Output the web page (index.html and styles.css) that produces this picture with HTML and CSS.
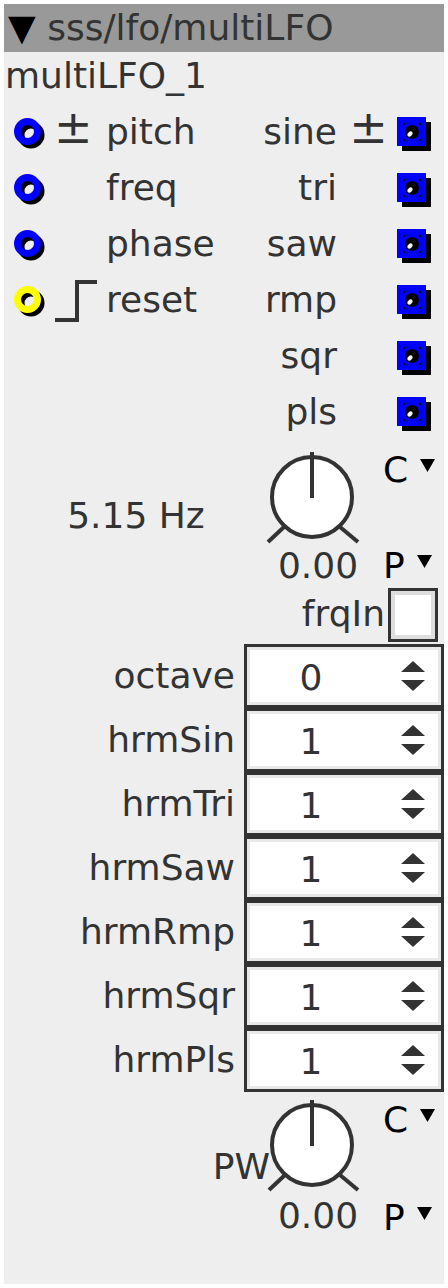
FILE: index.html
```html
<!DOCTYPE html>
<html>
<head>
<meta charset="utf-8">
<link rel="stylesheet" href="styles.css">
</head>
<body>
<div class="node">
  <div class="hdr"><span class="hdr-tri">▼</span> sss/lfo/multiLFO</div>
  <div class="name">multiLFO_1</div>

  <div class="io">
    <div class="ins">
      <div class="in">
        <svg class="iport" width="40" height="40" viewBox="0 0 40 40"><circle cx="21" cy="23" r="10" fill="none" stroke="#000" stroke-width="7"/><circle cx="17.5" cy="19.5" r="10" fill="none" stroke="#0000ff" stroke-width="7"/></svg>
        <span class="sign">±</span>
        <span class="lbl">pitch</span>
      </div>
      <div class="in">
        <svg class="iport" width="40" height="40" viewBox="0 0 40 40"><circle cx="21" cy="23" r="10" fill="none" stroke="#000" stroke-width="7"/><circle cx="17.5" cy="19.5" r="10" fill="none" stroke="#0000ff" stroke-width="7"/></svg>
        <span class="sign"></span>
        <span class="lbl">freq</span>
      </div>
      <div class="in">
        <svg class="iport" width="40" height="40" viewBox="0 0 40 40"><circle cx="21" cy="23" r="10" fill="none" stroke="#000" stroke-width="7"/><circle cx="17.5" cy="19.5" r="10" fill="none" stroke="#0000ff" stroke-width="7"/></svg>
        <span class="sign"></span>
        <span class="lbl">phase</span>
      </div>
      <div class="in">
        <svg class="iport" width="40" height="40" viewBox="0 0 40 40"><circle cx="21" cy="23" r="10" fill="none" stroke="#000" stroke-width="7"/><circle cx="17.5" cy="19.5" r="10" fill="none" stroke="#ffff00" stroke-width="7"/></svg>
        <span class="sign step-cell"><svg class="step" width="52" height="56" viewBox="0 0 52 56"><path d="M1 48 H23 V10 H43" fill="none" stroke="#333" stroke-width="4"/></svg></span>
        <span class="lbl">reset</span>
      </div>
    </div>

    <div class="outs">
      <div class="out">
        <span class="lbl">sine</span>
        <span class="sign">±</span>
        <svg class="oport" width="40" height="40" viewBox="0 0 40 40"><rect x="8" y="10" width="29" height="29" fill="#000"/><rect x="3" y="5" width="29" height="29" fill="#0000ff"/><circle cx="18" cy="20" r="7" fill="#000"/><ellipse cx="16" cy="22" rx="3" ry="2" transform="rotate(-45 16 22)" fill="#fff"/><circle cx="10" cy="12" r="1.3" fill="#000"/><circle cx="26" cy="12" r="1.3" fill="#000"/><circle cx="10" cy="28" r="1.3" fill="#000"/><circle cx="26" cy="28" r="1.3" fill="#000"/></svg>
      </div>
      <div class="out">
        <span class="lbl">tri</span>
        <span class="sign"></span>
        <svg class="oport" width="40" height="40" viewBox="0 0 40 40"><rect x="8" y="10" width="29" height="29" fill="#000"/><rect x="3" y="5" width="29" height="29" fill="#0000ff"/><circle cx="18" cy="20" r="7" fill="#000"/><ellipse cx="16" cy="22" rx="3" ry="2" transform="rotate(-45 16 22)" fill="#fff"/><circle cx="10" cy="12" r="1.3" fill="#000"/><circle cx="26" cy="12" r="1.3" fill="#000"/><circle cx="10" cy="28" r="1.3" fill="#000"/><circle cx="26" cy="28" r="1.3" fill="#000"/></svg>
      </div>
      <div class="out">
        <span class="lbl">saw</span>
        <span class="sign"></span>
        <svg class="oport" width="40" height="40" viewBox="0 0 40 40"><rect x="8" y="10" width="29" height="29" fill="#000"/><rect x="3" y="5" width="29" height="29" fill="#0000ff"/><circle cx="18" cy="20" r="7" fill="#000"/><ellipse cx="16" cy="22" rx="3" ry="2" transform="rotate(-45 16 22)" fill="#fff"/><circle cx="10" cy="12" r="1.3" fill="#000"/><circle cx="26" cy="12" r="1.3" fill="#000"/><circle cx="10" cy="28" r="1.3" fill="#000"/><circle cx="26" cy="28" r="1.3" fill="#000"/></svg>
      </div>
      <div class="out">
        <span class="lbl">rmp</span>
        <span class="sign"></span>
        <svg class="oport" width="40" height="40" viewBox="0 0 40 40"><rect x="8" y="10" width="29" height="29" fill="#000"/><rect x="3" y="5" width="29" height="29" fill="#0000ff"/><circle cx="18" cy="20" r="7" fill="#000"/><ellipse cx="16" cy="22" rx="3" ry="2" transform="rotate(-45 16 22)" fill="#fff"/><circle cx="10" cy="12" r="1.3" fill="#000"/><circle cx="26" cy="12" r="1.3" fill="#000"/><circle cx="10" cy="28" r="1.3" fill="#000"/><circle cx="26" cy="28" r="1.3" fill="#000"/></svg>
      </div>
      <div class="out">
        <span class="lbl">sqr</span>
        <span class="sign"></span>
        <svg class="oport" width="40" height="40" viewBox="0 0 40 40"><rect x="8" y="10" width="29" height="29" fill="#000"/><rect x="3" y="5" width="29" height="29" fill="#0000ff"/><circle cx="18" cy="20" r="7" fill="#000"/><ellipse cx="16" cy="22" rx="3" ry="2" transform="rotate(-45 16 22)" fill="#fff"/><circle cx="10" cy="12" r="1.3" fill="#000"/><circle cx="26" cy="12" r="1.3" fill="#000"/><circle cx="10" cy="28" r="1.3" fill="#000"/><circle cx="26" cy="28" r="1.3" fill="#000"/></svg>
      </div>
      <div class="out">
        <span class="lbl">pls</span>
        <span class="sign"></span>
        <svg class="oport" width="40" height="40" viewBox="0 0 40 40"><rect x="8" y="10" width="29" height="29" fill="#000"/><rect x="3" y="5" width="29" height="29" fill="#0000ff"/><circle cx="18" cy="20" r="7" fill="#000"/><ellipse cx="16" cy="22" rx="3" ry="2" transform="rotate(-45 16 22)" fill="#fff"/><circle cx="10" cy="12" r="1.3" fill="#000"/><circle cx="26" cy="12" r="1.3" fill="#000"/><circle cx="10" cy="28" r="1.3" fill="#000"/><circle cx="26" cy="28" r="1.3" fill="#000"/></svg>
      </div>
    </div>
  </div>

  <div class="knob k1">
    <div class="kl">5.15 Hz</div>
    <div class="kc">
      <svg class="kdial" width="96" height="96" viewBox="0 0 96 96"><circle cx="48" cy="47" r="40" fill="#fff" stroke="#333" stroke-width="4"/><line x1="48" y1="2" x2="48" y2="48" stroke="#333" stroke-width="4"/><line x1="4" y1="92" x2="20" y2="77" stroke="#333" stroke-width="4"/><line x1="76" y1="77" x2="94" y2="92" stroke="#333" stroke-width="4"/></svg>
      <div class="kv">0.00</div>
    </div>
    <div class="kcp">
      <div class="cp">C<svg class="dd" width="15" height="13" viewBox="0 0 15 13"><polygon points="0,0 15,0 7.5,13" fill="#000"/></svg></div>
      <div class="cp">P<svg class="dd" width="15" height="13" viewBox="0 0 15 13"><polygon points="0,0 15,0 7.5,13" fill="#000"/></svg></div>
    </div>
  </div>

  <div class="chk">
    <span class="chk-lbl">frqIn</span>
    <div class="chk-box"></div>
  </div>

  <div class="nums">
    <div class="num"><div class="nl">octave</div><div class="nb"><div class="nv">0</div><div class="ns"><svg width="24" height="30" viewBox="0 0 24 30"><polygon points="0,11 12,0 24,11" fill="#333"/><polygon points="0,19 24,19 12,30" fill="#333"/></svg></div></div></div>
    <div class="num"><div class="nl">hrmSin</div><div class="nb"><div class="nv">1</div><div class="ns"><svg width="24" height="30" viewBox="0 0 24 30"><polygon points="0,11 12,0 24,11" fill="#333"/><polygon points="0,19 24,19 12,30" fill="#333"/></svg></div></div></div>
    <div class="num"><div class="nl">hrmTri</div><div class="nb"><div class="nv">1</div><div class="ns"><svg width="24" height="30" viewBox="0 0 24 30"><polygon points="0,11 12,0 24,11" fill="#333"/><polygon points="0,19 24,19 12,30" fill="#333"/></svg></div></div></div>
    <div class="num"><div class="nl">hrmSaw</div><div class="nb"><div class="nv">1</div><div class="ns"><svg width="24" height="30" viewBox="0 0 24 30"><polygon points="0,11 12,0 24,11" fill="#333"/><polygon points="0,19 24,19 12,30" fill="#333"/></svg></div></div></div>
    <div class="num"><div class="nl">hrmRmp</div><div class="nb"><div class="nv">1</div><div class="ns"><svg width="24" height="30" viewBox="0 0 24 30"><polygon points="0,11 12,0 24,11" fill="#333"/><polygon points="0,19 24,19 12,30" fill="#333"/></svg></div></div></div>
    <div class="num"><div class="nl">hrmSqr</div><div class="nb"><div class="nv">1</div><div class="ns"><svg width="24" height="30" viewBox="0 0 24 30"><polygon points="0,11 12,0 24,11" fill="#333"/><polygon points="0,19 24,19 12,30" fill="#333"/></svg></div></div></div>
    <div class="num"><div class="nl">hrmPls</div><div class="nb"><div class="nv">1</div><div class="ns"><svg width="24" height="30" viewBox="0 0 24 30"><polygon points="0,11 12,0 24,11" fill="#333"/><polygon points="0,19 24,19 12,30" fill="#333"/></svg></div></div></div>
  </div>

  <div class="knob k2">
    <div class="kl kl-right"><span class="pw">PW</span></div>
    <div class="kc">
      <svg class="kdial" width="96" height="96" viewBox="0 0 96 96"><circle cx="48" cy="45" r="40" fill="#fff" stroke="#333" stroke-width="4"/><line x1="48" y1="0" x2="48" y2="46" stroke="#333" stroke-width="4"/><line x1="5" y1="90" x2="21" y2="75" stroke="#333" stroke-width="4"/><line x1="76" y1="75" x2="94" y2="90" stroke="#333" stroke-width="4"/></svg>
      <div class="kv">0.00</div>
    </div>
    <div class="kcp">
      <div class="cp">C<svg class="dd" width="15" height="13" viewBox="0 0 15 13"><polygon points="0,0 15,0 7.5,13" fill="#000"/></svg></div>
      <div class="cp">P<svg class="dd" width="15" height="13" viewBox="0 0 15 13"><polygon points="0,0 15,0 7.5,13" fill="#000"/></svg></div>
    </div>
  </div>
</div>
</body>
</html>
```

FILE: styles.css
```css
html, body {
  background: #fff;
}
body {
  margin: 4px;
  font-family: "DejaVu Sans", "Noto Sans", sans-serif;
  font-size: 36px;
  color: #333;
}
.node {
  background: #eeeeee;
  height: 1280px;
  display: flex;
  flex-direction: column;
}
.hdr {
  background: #999999;
  height: 48px;
  line-height: 48px;
  padding-left: 4px;
  white-space: nowrap;
  color: #333;
}
.hdr-tri {
  color: #000;
}
.name {
  height: 52px;
  line-height: 48px;
  padding-left: 1px;
}
.io {
  display: grid;
  grid-template-columns: 1fr 1fr;
}
.ins, .outs {
  display: flex;
  flex-direction: column;
}
.in {
  height: 56px;
  display: grid;
  grid-template-columns: 50px 52px 1fr;
  align-items: center;
  line-height: 56px;
}
.out {
  height: 56px;
  display: grid;
  grid-template-columns: 1fr 56px 50px;
  align-items: center;
  line-height: 56px;
}
.iport {
  margin-left: 6px;
  display: block;
}
.sign {
  height: 56px;
  font-size: 46px;
  line-height: 52px;
  display: flex;
  align-items: center;
  padding-bottom: 10px;
  box-sizing: border-box;
}
.step-cell {
  padding-bottom: 0;
}
.step {
  display: block;
}
.in .lbl {
  white-space: nowrap;
}
.out .lbl {
  text-align: right;
  padding-right: 1px;
  white-space: nowrap;
}
.out .sign {
  justify-content: center;
  padding-left: 5px;
}
.oport {
  display: block;
}
.knob {
  display: flex;
}
.k1 {
  padding-top: 10px;
  height: 136px;
}
.k2 {
  padding-top: 8px;
  height: 138px;
}
.kl {
  width: 260px;
  flex: none;
  display: flex;
  align-items: center;
  justify-content: center;
  padding-bottom: 6px;
  padding-left: 4px;
  box-sizing: border-box;
}
.kl-right {
  justify-content: flex-end;
  padding-left: 0;
}
.pw {
  margin-right: -6px;
}
.kc {
  width: 96px;
  flex: none;
  display: flex;
  flex-direction: column;
}
.kdial {
  display: block;
}
.kv {
  line-height: 40px;
  height: 40px;
  text-align: center;
  padding-left: 12px;
  white-space: nowrap;
}
.kcp {
  margin-left: 23px;
  display: flex;
  flex-direction: column;
  justify-content: space-between;
  color: #000;
}
.cp {
  display: flex;
  align-items: flex-start;
  line-height: 40px;
  height: 40px;
}
.dd {
  margin-left: 12px;
  margin-top: 9px;
}
.chk {
  height: 58px;
  display: flex;
  justify-content: flex-end;
  align-items: flex-start;
}
.chk-lbl {
  line-height: 56px;
  margin-right: 3px;
}
.chk-box {
  width: 50px;
  height: 54px;
  margin-top: 2px;
  margin-right: 6px;
  box-sizing: border-box;
  border: 3px solid #333;
  background: #fff;
  box-shadow: inset 0 0 0 4px #dddddd;
}
.nums {
  display: flex;
  flex-direction: column;
}
.num {
  display: flex;
  height: 64px;
}
.nl {
  width: 240px;
  flex: none;
  text-align: right;
  line-height: 64px;
  padding-right: 9px;
  box-sizing: border-box;
  white-space: nowrap;
}
.nb {
  width: 200px;
  height: 64px;
  flex: none;
  box-sizing: border-box;
  border: 3px solid #333;
  background: #fff;
  box-shadow: inset 0 0 0 3px #e8e8e8;
  display: flex;
  align-items: center;
}
.nv {
  width: 128px;
  text-align: center;
  line-height: 58px;
  padding-top: 4px;
}
.ns {
  flex: 1;
  display: flex;
  justify-content: center;
  align-items: center;
  padding-left: 10px;
}
.ns svg {
  display: block;
}
```
